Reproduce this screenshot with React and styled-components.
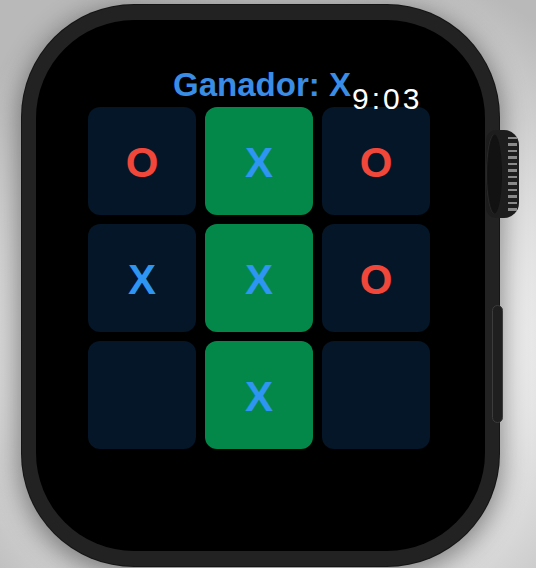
import React from "react";
import styled, { createGlobalStyle } from "styled-components";

const GlobalStyle = createGlobalStyle`
  html, body { margin: 0; padding: 0; }
  body {
    width: 536px;
    height: 568px;
    overflow: hidden;
    font-family: "Liberation Sans", Arial, sans-serif;
  }
`;

const Stage = styled.div`
  width: 536px;
  height: 568px;
  box-sizing: border-box;
  padding: 5px 0 0 22px;
  background: radial-gradient(ellipse 75% 70% at 55% 60%, #fbfbfb 0%, #ececec 55%, #b9b9b9 100%);
  overflow: hidden;
`;

const Watch = styled.div`
  position: relative;
  width: 477px;
  height: 561px;
  box-sizing: border-box;
  padding: 15px 14px;
  background: #222222;
  border-radius: 112px;
  box-shadow: 0 0 0 1px #151515, 0 6px 26px 4px rgba(0, 0, 0, 0.42);
`;

const Screen = styled.div`
  position: relative;
  height: 100%;
  box-sizing: border-box;
  padding-top: 48px;
  background: #000;
  border-radius: 98px;
  display: flex;
  flex-direction: column;
  align-items: center;
`;

const Title = styled.div`
  font-size: 33px;
  line-height: 33px;
  font-weight: 700;
  color: #3a8de6;
  margin-bottom: 6px;
  padding-left: 3px;
`;

const Clock = styled.div`
  position: absolute;
  left: 316px;
  top: 64px;
  font-size: 30px;
  line-height: 30px;
  letter-spacing: 3px;
  color: #ffffff;
`;

const Board = styled.div`
  display: grid;
  grid-template-columns: repeat(3, 108px);
  grid-auto-rows: 108px;
  gap: 9px;
  margin-right: 3px;
`;

const Cell = styled.div`
  border-radius: 12px;
  background: ${(p) => (p.$win ? "#03884a" : "#041627")};
  display: flex;
  align-items: center;
  justify-content: center;
  font-size: 42px;
  font-weight: 700;
  color: ${(p) => (p.$mark === "O" ? "#f1473a" : "#2e95f2")};
  padding-top: 3px;
  box-sizing: border-box;
`;

const Crown = styled.div`
  position: absolute;
  left: 464px;
  top: 125px;
  width: 33px;
  height: 88px;
  border-radius: 10px 15px 15px 10px;
  background: #1d1d1d;
  overflow: hidden;
  &::before {
    content: "";
    position: absolute;
    left: 0;
    top: 4px;
    width: 16px;
    height: 80px;
    border-radius: 50%;
    background: #121212;
    box-shadow: inset 1px 0 1px #2c2c2c;
  }
  &::after {
    content: "";
    position: absolute;
    left: 22px;
    top: 3px;
    width: 9px;
    height: 82px;
    background: repeating-linear-gradient(
      to bottom,
      transparent 0px,
      transparent 4px,
      #8a8a8a 4px,
      #8a8a8a 6.5px
    );
  }
`;

const SideButton = styled.div`
  position: absolute;
  left: 470px;
  top: 300px;
  width: 11px;
  height: 118px;
  box-sizing: border-box;
  border-radius: 6px;
  border: 1px solid #3c3c3c;
  background: #1f1f1f;
`;

const board = [
  ["O", false],
  ["X", true],
  ["O", false],
  ["X", false],
  ["X", true],
  ["O", false],
  ["", false],
  ["X", true],
  ["", false],
];

export default function App() {
  return (
    <>
      <GlobalStyle />
      <Stage>
        <Watch>
          <Screen>
            <Title>Ganador: X</Title>
            <Clock>9:03</Clock>
            <Board>
              {board.map(([mark, win], i) => (
                <Cell key={i} $mark={mark} $win={win}>
                  {mark}
                </Cell>
              ))}
            </Board>
          </Screen>
          <Crown />
          <SideButton />
        </Watch>
      </Stage>
    </>
  );
}
